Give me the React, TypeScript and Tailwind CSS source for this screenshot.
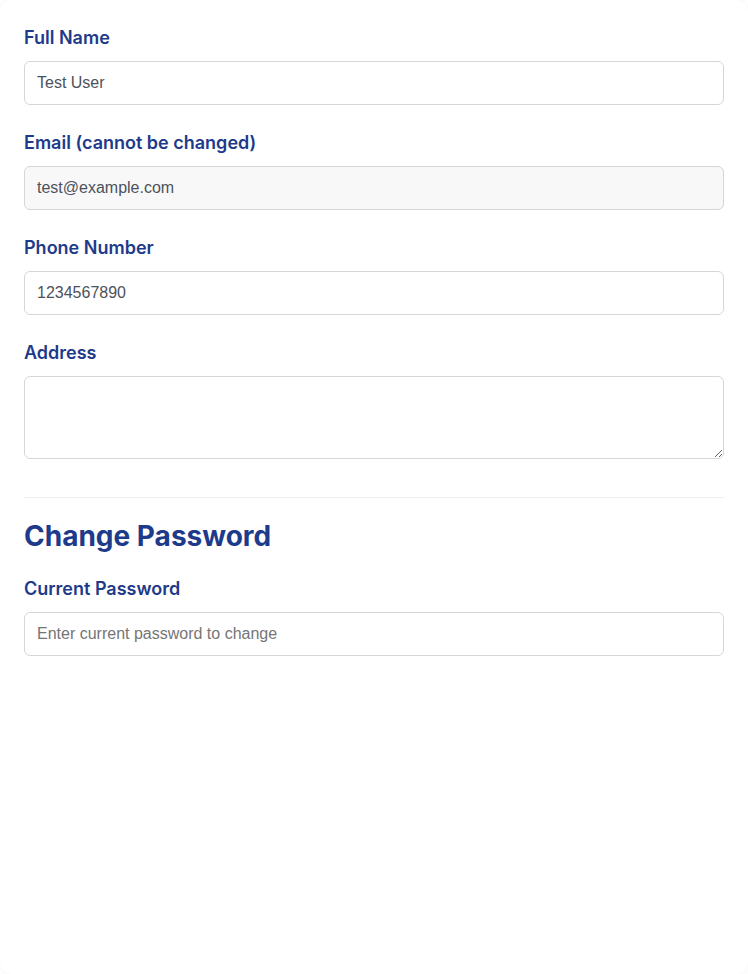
import React from 'react';

const labelCls =
  "block mb-2.5 text-lg leading-[27px] font-semibold text-[#1e3a8a] [font-family:Inter,'Noto_Sans',sans-serif]";
const inputCls =
  "block w-full h-[44px] px-3 rounded-md border border-[#d4d6da] text-base text-[#4d525a] placeholder:text-[#757575] outline-none [font-family:'Liberation_Sans',Arial,sans-serif]";

function Field({
  label,
  children,
}: {
  label: string;
  children: React.ReactNode;
}) {
  return (
    <div className="mb-6">
      <label className={labelCls}>{label}</label>
      {children}
    </div>
  );
}

export default function App() {
  return (
    <div className="min-h-screen bg-white">
      <div className="min-h-[974px] bg-white rounded-xl shadow-[0_0_6px_rgba(0,0,0,0.05)] px-6 pt-6 pb-10">
        <Field label="Full Name">
          <input className={inputCls} defaultValue="Test User" />
        </Field>
        <Field label="Email (cannot be changed)">
          <input
            className={`${inputCls} bg-[#f8f8f9]`}
            defaultValue="test@example.com"
            readOnly
          />
        </Field>
        <Field label="Phone Number">
          <input className={inputCls} defaultValue="1234567890" />
        </Field>
        <Field label="Address">
          <textarea
            className="block w-full h-[83px] px-3 py-2 rounded-md border border-[#d4d6da] text-base text-[#4d525a] outline-none [font-family:'Liberation_Sans',Arial,sans-serif]"
          />
        </Field>

        <div className="mt-[38px] border-t border-[#eeeff1] pt-[20px]">
          <h2 className="text-[28px] leading-9 font-bold text-[#1e3a8a] mb-[21px] [font-family:Inter,'Noto_Sans',sans-serif]">
            Change Password
          </h2>
          <Field label="Current Password">
            <input
              type="password"
              className={inputCls}
              placeholder="Enter current password to change"
            />
          </Field>
        </div>
      </div>
    </div>
  );
}
